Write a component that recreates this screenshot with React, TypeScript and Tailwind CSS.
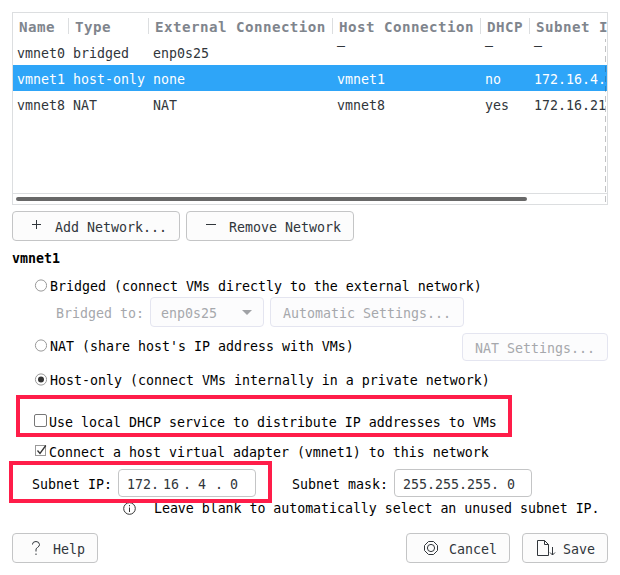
import type { ReactNode } from "react";

const columns = ["Name", "Type", "External Connection", "Host Connection", "DHCP", "Subnet I"];

const networks = [
  ["vmnet0", "bridged", "enp0s25", "–", "–", "–"],
  ["vmnet1", "host-only", "none", "vmnet1", "no", "172.16.4."],
  ["vmnet8", "NAT", "NAT", "vmnet8", "yes", "172.16.21"],
];

const grid = "grid w-[594px] grid-cols-[56px_80px_184px_148px_49px_77px]";

function Radio({ checked = false }: { checked?: boolean }) {
  return (
    <svg className="-mt-[2px] h-[13px] w-[13px] shrink-0" viewBox="0 0 13 13">
      <circle cx="7" cy="6.5" r="5.6" fill="#fff" stroke="#999" strokeWidth="1" />
      {checked && <circle cx="7" cy="6.5" r="3" fill="#333" />}
    </svg>
  );
}

function Button({ className, children }: { className: string; children: ReactNode }) {
  return (
    <button className={`flex shrink-0 items-center whitespace-pre rounded-[4px] border ${className}`}>
      {children}
    </button>
  );
}

function Table() {
  return (
    <div className="relative h-[193px] w-[596px] overflow-hidden border border-[#dcdee0]">
      <div className={`${grid} h-[26px] pt-[5px] text-[14.2px] font-bold tracking-[0.45px] text-[#7f858d]`}>
        {columns.map((c, i) => (
          <div key={c} className={`h-[16px] whitespace-nowrap pl-[6px] leading-[18px] ${i < 5 ? "border-r border-[#dcdee0]" : ""}`}>
            {c}
          </div>
        ))}
      </div>
      {networks.map((row, r) => (
        <div key={row[0]} className={`${grid} h-[26px] leading-[30px] ${r === 1 ? "bg-[#2ea5f8] text-white" : "text-[#31363b]"}`}>
          {row.map((cell, i) => (
            <div key={i} className={`pl-[4px] ${cell === "–" ? "-mt-[8px]" : ""}`}>{cell}</div>
          ))}
        </div>
      ))}
      <div className="mt-[76px] h-[11px] border-t border-[#dcdee0] px-[3px] pt-[3px]">
        <div className="h-[4px] w-[511px] rounded-full bg-[#686868]" />
      </div>
      <svg className="absolute right-[1px] top-[26px] h-[165px] w-[1px]">
        <line x1="0.5" y1="0" x2="0.5" y2="165" stroke="#31363b" strokeOpacity="0.3" strokeDasharray="6 4" strokeDashoffset="3" />
      </svg>
    </div>
  );
}

export default function App() {
  return (
    <main className="h-[575px] w-[620px] overflow-hidden bg-white px-[12px] pt-[12px] font-['DejaVu_Sans_Mono','Liberation_Mono',monospace] text-[13.29px] text-black">
      <Table />
      <div className="mt-[6px] flex gap-[6px] text-[#31363b]">
        <Button className="h-[30px] w-[168px] border-[#c4c5c6] bg-[#fcfcfc] pl-[19px]">
          <svg className="-mt-[3px] mr-[14px] h-[9px] w-[9px]" viewBox="0 0 9 9"><path d="M4.5 0v9M0 4.5h9" stroke="#31363b" /></svg>
          <span className="pt-[4px]">Add Network...</span>
        </Button>
        <Button className="h-[30px] w-[168px] border-[#c4c5c6] bg-[#fcfcfc] pl-[19px]">
          <svg className="-mt-[3px] mr-[13px] h-[9px] w-[10px]" viewBox="0 0 10 9"><path d="M0 4.5h10" stroke="#31363b" /></svg>
          <span className="pt-[4px]">Remove Network</span>
        </Button>
      </div>
      <h2 className="mt-[7px] h-[20px] text-[13.29px] font-bold leading-[22px]">vmnet1</h2>

      <div className="mt-[8px] flex h-[20px] items-center gap-[3px] pl-[22px]">
        <Radio /><span className="pt-[2px]">Bridged (connect VMs directly to the external network)</span>
      </div>
      <div className="mt-[1px] flex items-center pl-[44px] text-[#a6a8ac]">
        <span className="w-[94px] pt-[4px]">Bridged to:</span>
        <Button className="h-[30px] w-[114px] border-[#e4e5f0] bg-[#fcfcfd] pl-[10px]">
          <span className="w-[81px] pt-[4px] text-left">enp0s25</span>
          <svg className="h-[5px] w-[10px]" viewBox="0 0 10 5"><path d="M0 0h10L5 5z" fill="#a0a2a6" /></svg>
        </Button>
        <Button className="ml-[6px] h-[30px] w-[194px] border-[#e4e5f0] bg-[#fcfcfd] pl-[12px]">
          <span className="pt-[4px]">Automatic Settings...</span>
        </Button>
      </div>

      <div className="mt-[6px] flex h-[28px] items-center gap-[3px] pl-[22px]">
        <div className="-mt-[2px]"><Radio /></div>
        <span className="flex-1">NAT (share host&apos;s IP address with VMs)</span>
        <Button className="h-[28px] w-[146px] border-[#e4e5f0] bg-[#fcfcfd] pl-[12px] text-[#a6a8ac]">
          <span className="pt-[4px]">NAT Settings...</span>
        </Button>
      </div>
      <div className="mt-[9px] flex h-[20px] items-center gap-[3px] pl-[22px]">
        <Radio checked /><span className="pt-[2px]">Host-only (connect VMs internally in a private network)</span>
      </div>

      <div className="relative mt-[22px] flex h-[20px] items-center gap-[2px] pl-[22px]">
        <span className="-mt-[3px] h-[13px] w-[13px] rounded-[2px] border border-[#777]" />
        <span className="pt-[2px]">Use local DHCP service to distribute IP addresses to VMs</span>
        <div className="absolute left-[4px] top-[-17px] h-[42px] w-[496px] border-4 border-[#ff1d49]" />
      </div>
      <div className="mt-[10px] flex h-[20px] items-center gap-[2px] pl-[22px]">
        <svg className="-mt-[3px] h-[13px] w-[13px]" viewBox="0 0 13 13" fill="none">
          <rect x="1.5" y="1.5" width="10" height="10" stroke="#999" />
          <path d="M3.5 6.5l2.5 3L11.8 1.5" stroke="#333" strokeWidth="1.3" />
        </svg>
        <span className="pt-[2px]">Connect a host virtual adapter (vmnet1) to this network</span>
      </div>

      <div className="relative mt-[7px] flex h-[28px] items-center pl-[20px]">
        <span className="w-[86px] pt-[4px]">Subnet IP:</span>
        <div className="flex h-[28px] w-[138px] items-center rounded-[4px] border border-[#c4c5c6] pl-[8px] pt-[4px] text-[#31363b]">
          <span className="w-[24px]">172</span><span className="w-[12px]">.</span>
          <span className="w-[20px]">16</span><span className="w-[15px]">.</span>
          <span className="w-[17px]">4</span><span className="w-[15px]">.</span><span>0</span>
        </div>
        <span className="ml-[36px] w-[102px] pt-[4px]">Subnet mask:</span>
        <div className="h-[28px] w-[138px] whitespace-pre rounded-[4px] border border-[#c4c5c6] pl-[8px] leading-[30px] text-[#31363b]">255.255.255. 0</div>
        <div className="absolute left-[-3px] top-[-8px] h-[42px] w-[263px] border-4 border-[#ff1d49]" />
      </div>
      <div className="mt-[1px] flex h-[20px] items-center pl-[111px]">
        <svg className="mr-[18px] h-[13px] w-[13px]" viewBox="0 0 13 13" fill="none" stroke="#333">
          <circle cx="6.5" cy="6.5" r="5.8" /><path d="M6.5 5.5v4.5M6.5 3v1.3" />
        </svg>
        <span className="whitespace-nowrap pt-[2px] tracking-[-0.04px]">Leave blank to automatically select an unused subnet IP.</span>
      </div>

      <div className="mt-[15px] flex text-[#31363b]">
        <Button className="h-[30px] w-[86px] border-[#c4c5c6] bg-[#fcfcfc] pl-[19px]">
          <svg className="-mt-[1px] mr-[13px] h-[14px] w-[8px]" viewBox="0 0 8 14" fill="none" stroke="#31363b">
            <path d="M.5 3.5V3Q.8.5 4 .5T7.5 3.5Q7.5 5.3 5.5 6.5T4 9v1.5M4 12.5v1.5" />
          </svg>
          <span className="pt-[4px]">Help</span>
        </Button>
        <Button className="ml-[308px] h-[30px] w-[104px] border-[#c4c5c6] bg-[#fcfcfc] pl-[17px]">
          <svg className="-mt-[1px] mr-[11px] h-[14px] w-[14px]" viewBox="0 0 14 14" fill="none" stroke="#31363b">
            <path d="M4.5.5h5l4 4v5l-4 4h-5l-4-4v-5z" /><circle cx="7" cy="7" r="3.6" />
          </svg>
          <span className="pt-[4px]">Cancel</span>
        </Button>
        <Button className="ml-[12px] h-[30px] w-[86px] border-[#c4c5c6] bg-[#fcfcfc] pl-[14px]">
          <svg className="-mt-[1px] mr-[7px] h-[16px] w-[19px]" viewBox="0 0 19 16" fill="none" stroke="#31363b">
            <path d="M11.5 15.5H.5V.5h7l4 4v11M7.5.5v4h4M15.5 7v8M13 12.5l2.5 2.5 2.5-2.5" />
          </svg>
          <span className="pt-[4px]">Save</span>
        </Button>
      </div>
    </main>
  );
}
